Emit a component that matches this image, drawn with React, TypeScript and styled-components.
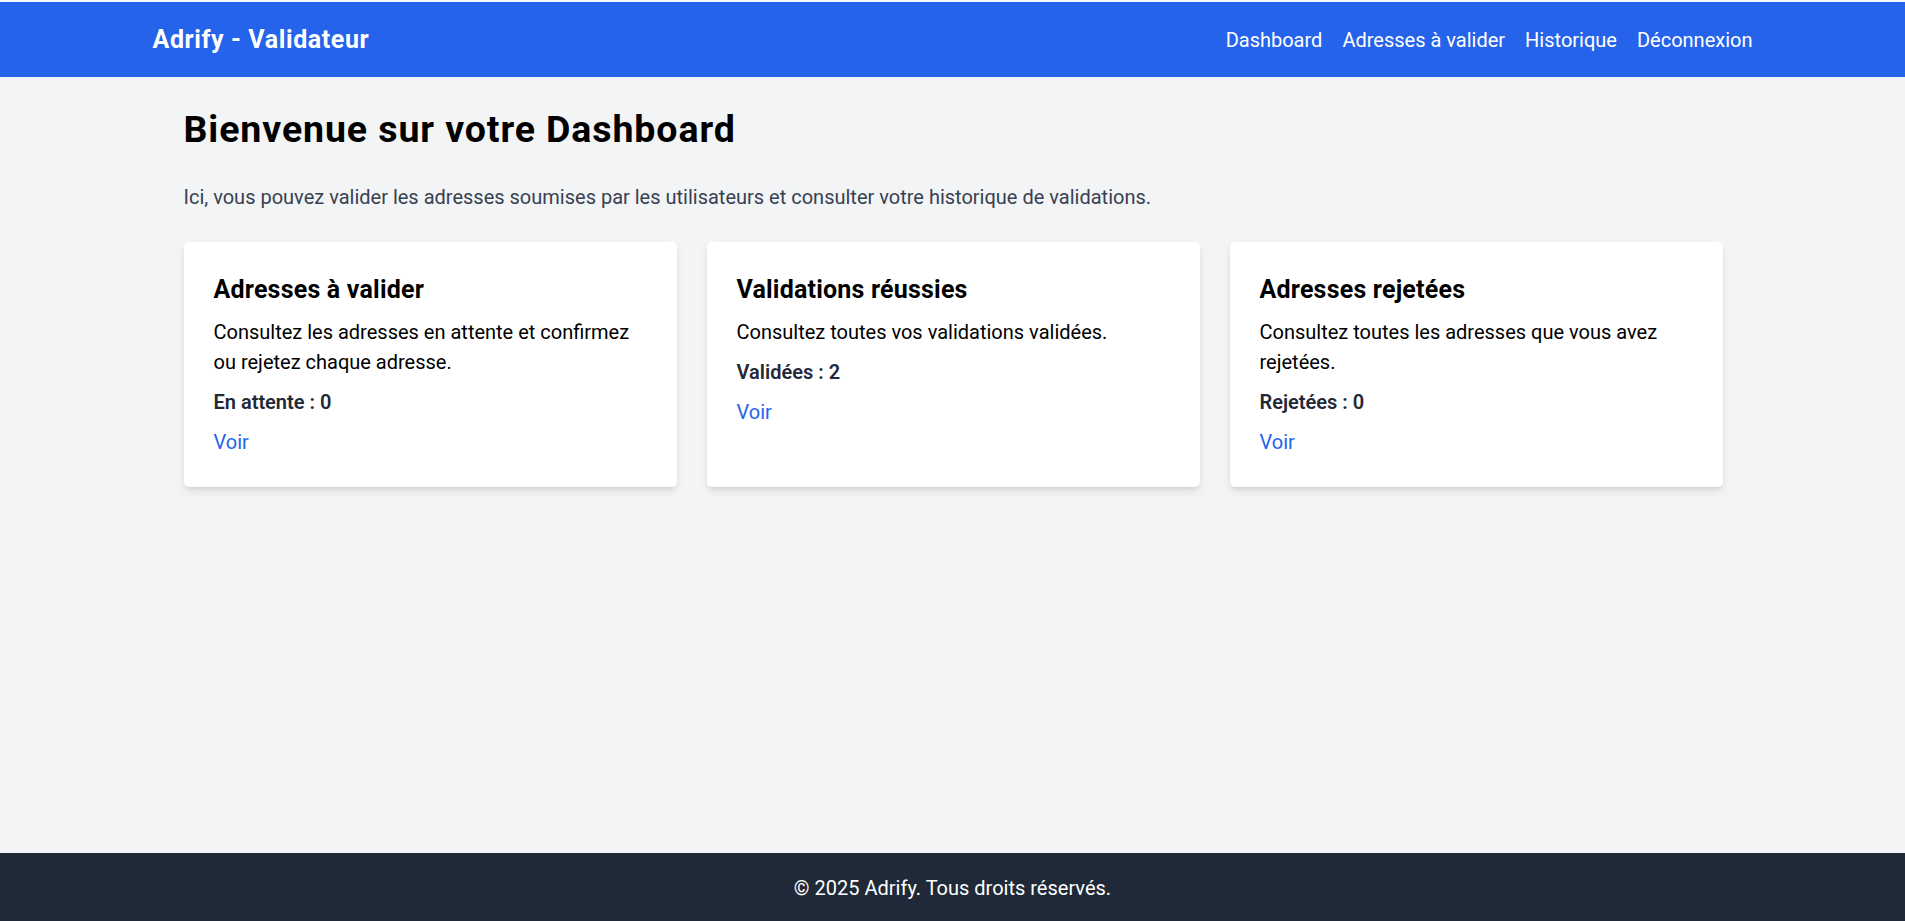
import styled, { createGlobalStyle } from "styled-components";

const GlobalStyle = createGlobalStyle`
  * { box-sizing: border-box; }
  body {
    margin: 0;
    padding-top: 2px;
    background: #f3f4f6;
    font-family: Roboto, "Noto Sans", sans-serif;
    color: #000;
  }
`;

const StPage = styled.div`
  display: flex;
  flex-direction: column;
  min-height: 100vh;
`;

const StHeader = styled.header`
  background-color: #2563eb;
  color: #fff;
  padding: 20px 0;
`;

const StHeaderInner = styled.div`
  display: flex;
  justify-content: space-between;
  align-items: center;
  max-width: 1600px;
  margin: 0 auto;
`;

const StBrand = styled.h1`
  margin: 0;
  font-size: 25px;
  line-height: 35px;
  font-weight: 700;
  letter-spacing: 0.6px;
`;

const StNav = styled.nav`
  display: flex;
  gap: 20px;
`;

const StNavLink = styled.a`
  color: #fff;
  text-decoration: none;
  font-size: 20px;
  line-height: 30px;
`;

const StMain = styled.main`
  flex: 1 0 auto;
  width: 100%;
  max-width: 1600px;
  margin: 0 auto;
  padding: 30px 30px 30px 31px;
`;

const StTitle = styled.h2`
  margin: 0 0 30px;
  font-size: 37.5px;
  line-height: 45px;
  font-weight: 700;
  letter-spacing: 0.9px;
`;

const StIntro = styled.p`
  margin: 0 0 30px;
  font-size: 20px;
  line-height: 30px;
  color: #374151;
`;

const StCardGrid = styled.div`
  display: grid;
  grid-template-columns: repeat(3, 1fr);
  gap: 30px;
`;

const StCard = styled.div`
  background-color: #fff;
  border-radius: 5px;
  padding: 30px;
  box-shadow: 0 5px 8px -1px rgba(0, 0, 0, 0.1), 0 2px 5px -2px rgba(0, 0, 0, 0.1);
`;

const StCardTitle = styled.h3`
  margin: 0 0 10px;
  font-size: 25px;
  line-height: 35px;
  font-weight: 700;
  letter-spacing: 0.2px;
`;

const StCardText = styled.p`
  margin: 0 0 10px;
  font-size: 20px;
  line-height: 30px;
`;

const StCardStat = styled.p`
  margin: 0;
  font-size: 20px;
  line-height: 30px;
  font-weight: 600;
  color: #1f2937;
`;

const StCardLink = styled.a`
  display: inline-block;
  margin-top: 10px;
  font-size: 20px;
  line-height: 30px;
  color: #2563eb;
  text-decoration: none;
`;

const StFooter = styled.footer`
  background-color: #1f2937;
  color: #fff;
  text-align: center;
  padding: 20px;
  font-size: 20px;
  line-height: 30px;
`;

const cards = [
  {
    title: "Adresses à valider",
    text: "Consultez les adresses en attente et confirmez ou rejetez chaque adresse.",
    stat: "En attente : 0",
  },
  {
    title: "Validations réussies",
    text: "Consultez toutes vos validations validées.",
    stat: "Validées : 2",
  },
  {
    title: "Adresses rejetées",
    text: "Consultez toutes les adresses que vous avez rejetées.",
    stat: "Rejetées : 0",
  },
];

const App = () => {
  return (
    <StPage>
      <GlobalStyle />
      <StHeader>
        <StHeaderInner>
          <StBrand>Adrify - Validateur</StBrand>
          <StNav>
            <StNavLink href="#">Dashboard</StNavLink>
            <StNavLink href="#">Adresses à valider</StNavLink>
            <StNavLink href="#">Historique</StNavLink>
            <StNavLink href="#">Déconnexion</StNavLink>
          </StNav>
        </StHeaderInner>
      </StHeader>
      <StMain>
        <StTitle>Bienvenue sur votre Dashboard</StTitle>
        <StIntro>
          Ici, vous pouvez valider les adresses soumises par les utilisateurs et
          consulter votre historique de validations.
        </StIntro>
        <StCardGrid>
          {cards.map((card) => (
            <StCard key={card.title}>
              <StCardTitle>{card.title}</StCardTitle>
              <StCardText>{card.text}</StCardText>
              <StCardStat>{card.stat}</StCardStat>
              <StCardLink href="#">Voir</StCardLink>
            </StCard>
          ))}
        </StCardGrid>
      </StMain>
      <StFooter>© 2025 Adrify. Tous droits réservés.</StFooter>
    </StPage>
  );
};

export default App;
